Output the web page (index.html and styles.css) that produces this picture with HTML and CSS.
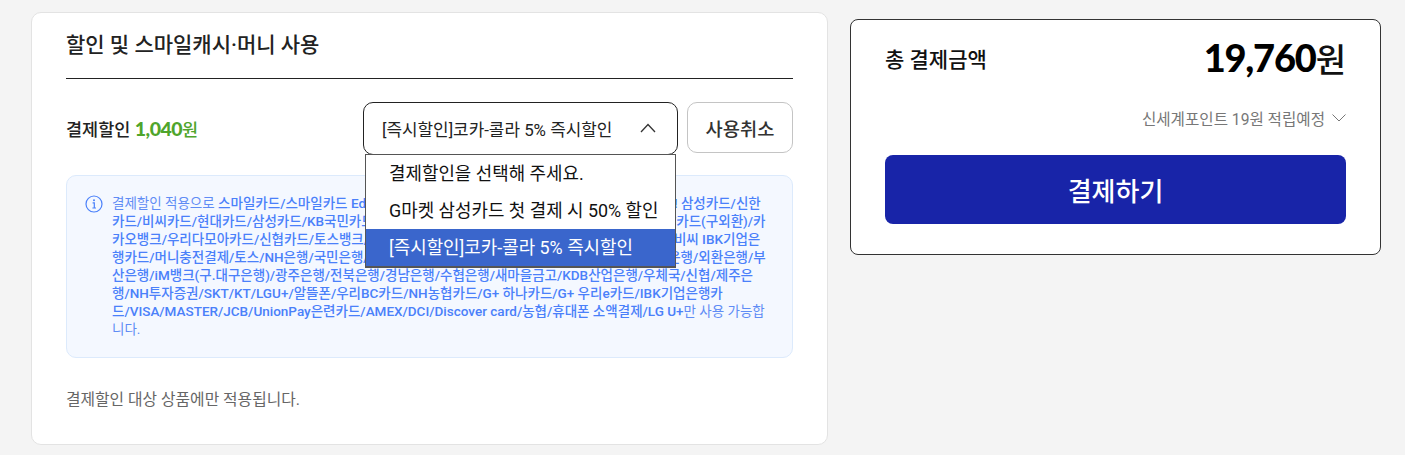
FILE: index.html
```html
<!DOCTYPE html>
<html lang="ko">
<head>
  <meta charset="UTF-8" />
  <meta name="viewport" content="width=device-width, initial-scale=1.0" />
  <title>결제하기</title>
  <link rel="stylesheet" href="styles.css">
</head>
<body>
  <div class="page">
    <section class="discount-card">
      <h2 class="discount-title">할인 및 스마일캐시·머니 사용</h2>

      <div class="discount-row">
        <div class="discount-label">결제할인 <strong class="discount-amount"><b>1,040</b>원</strong></div>
        <div class="discount-controls">
          <div class="select-wrap">
            <button class="select-box" type="button">
              <span>[즉시할인]코카-콜라 5% 즉시할인</span>
              <svg class="select-arrow" width="16" height="10" viewBox="0 0 16 10" aria-hidden="true">
                <path d="M1 9 L8 1.5 L15 9" fill="none" stroke="#333" stroke-width="1.3" />
              </svg>
            </button>
            <ul class="select-menu">
              <li>결제할인을 선택해 주세요.</li>
              <li>G마켓 삼성카드 첫 결제 시 50% 할인</li>
              <li class="selected">[즉시할인]코카-콜라 5% 즉시할인</li>
            </ul>
          </div>
          <button class="cancel-btn" type="button">사용취소</button>
        </div>
      </div>

      <div class="notice">
        <svg class="notice-icon" width="18" height="18" viewBox="0 0 18 18" aria-hidden="true">
          <circle cx="9" cy="9" r="8" fill="none" stroke="#4a80fa" stroke-width="1.2" />
          <circle cx="9" cy="5.2" r="1" fill="#4a80fa" />
          <path d="M7.6 7.8 H9.3 V13 M7.4 13 H11" fill="none" stroke="#4a80fa" stroke-width="1.2" />
        </svg>
        <p class="notice-text">결제할인 적용으로 <b>스마일카드/스마일카드 Edition2/스마일페이 간편결제 수단으로 결제 시 할인 적용! 삼성카드/신한<br>
        카드/비씨카드/현대카드/삼성카드/KB국민카드/롯데카드/하나카드/농협카드/씨티카드/수협카드/BC/카드(구외환)/카<br>
        카오뱅크/우리다모아카드/신협카드/토스뱅크/케이뱅크/수협카드/전북카드/제주카드/저축은/우체국/비씨 IBK기업은<br>
        행카드/머니충전결제/토스/NH은행/국민은행/신한은행/우리은행/하나은행/씨티은행/기업은행/농협은행/외환은행/부<br>
        산은행/iM뱅크(구.대구은행)/광주은행/전북은행/경남은행/수협은행/새마을금고/KDB산업은행/우체국/신협/제주은<br>
        행/NH투자증권/SKT/KT/LGU+/알뜰폰/우리BC카드/NH농협카드/G+ 하나카드/G+ 우리e카드/IBK기업은행카<br>
        드/VISA/MASTER/JCB/UnionPay은련카드/AMEX/DCI/Discover card/농협/휴대폰 소액결제/LG U+</b>만 사용 가능합<br>
        니다.</p>
      </div>

      <p class="discount-foot">결제할인 대상 상품에만 적용됩니다.</p>
    </section>

    <aside class="total-card">
      <div class="total-row">
        <span class="total-label">총 결제금액</span>
        <span class="total-price"><b>19,760</b>원</span>
      </div>
      <div class="point-row">
        <span>신세계포인트 19원 적립예정</span>
        <svg width="14" height="8" viewBox="0 0 14 8" aria-hidden="true">
          <path d="M0.5 0.5 L7 7 L13.5 0.5" fill="none" stroke="#777" stroke-width="1" />
        </svg>
      </div>
      <button class="pay-btn" type="button">결제하기</button>
    </aside>
  </div>
</body>
</html>
```

FILE: styles.css
```css
* {
  box-sizing: border-box;
}

body {
  margin: 0;
  background: #f4f4f4;
  font-family: Roboto, "Noto Sans CJK KR", sans-serif;
  color: #222;
  overflow: hidden;
}

.page {
  display: flex;
  align-items: flex-start;
  gap: 22px;
  padding: 12px 0 0 31px;
}

button {
  font-family: inherit;
  background: #fff;
  cursor: pointer;
}

/* left card */
.discount-card {
  width: 797px;
  height: 433px;
  background: #fff;
  border: 1px solid #e3e3e3;
  border-radius: 10px;
  padding: 0 34px;
}

.discount-title {
  margin: 0;
  height: 66px;
  line-height: 64px;
  font-size: 21px;
  font-weight: 500;
  color: #222;
  border-bottom: 1px solid #222;
}

.discount-row {
  display: flex;
  justify-content: space-between;
  align-items: center;
  margin-top: 23px;
  height: 52px;
}

.discount-label {
  font-size: 17.5px;
  font-weight: 500;
}

.discount-amount {
  font-weight: 500;
  color: #4fa52c;
}

.discount-amount b {
  font-family: Lato, sans-serif;
  font-weight: 900;
  font-size: 19.5px;
  letter-spacing: -0.5px;
}

.discount-controls {
  display: flex;
  gap: 9px;
}

.select-wrap {
  position: relative;
  width: 315px;
}

.select-box {
  display: flex;
  justify-content: space-between;
  align-items: center;
  width: 100%;
  height: 53px;
  padding: 0 21px 0 18px;
  border: 1px solid #222;
  border-radius: 10px;
  font-size: 16.9px;
  color: #222;
}

.select-menu {
  position: absolute;
  top: 52px;
  left: 2px;
  width: 311px;
  margin: 0;
  padding: 0;
  list-style: none;
  background: #fff;
  border: 1px solid #555;
  border-bottom: 2px solid #555;
  z-index: 10;
}

.select-menu li {
  height: 37px;
  line-height: 37px;
  padding-left: 23px;
  font-size: 17.9px;
  color: #111;
}

.select-menu li.selected {
  background: #3a66cc;
  color: #fff;
}

.cancel-btn {
  width: 106px;
  height: 51px;
  border: 1px solid #c4c4c4;
  border-radius: 10px;
  font-size: 18.7px;
  font-weight: 500;
  color: #333;
}

.notice {
  display: flex;
  gap: 9px;
  height: 183px;
  margin-top: 21px;
  padding: 18px 18px 0 18px;
  background: #f4f8ff;
  border: 1px solid #dceafc;
  border-radius: 10px;
}

.notice-icon {
  flex: none;
  margin-top: 1px;
}

.notice-text {
  margin: 0;
  font-size: 13.5px;
  line-height: 18px;
  color: #5f8cf5;
  white-space: nowrap;
}

.notice-text b {
  font-weight: 500;
  color: #4a80fa;
}

.discount-foot {
  margin: 29px 0 0;
  font-size: 15.8px;
  color: #666;
}

/* right card */
.total-card {
  width: 531px;
  height: 236px;
  margin-top: 7px;
  background: #fff;
  border: 1px solid #333;
  border-radius: 8px;
  padding: 0 34px;
}

.total-row {
  display: flex;
  justify-content: space-between;
  align-items: center;
  height: 76px;
}

.total-label {
  font-size: 21px;
  font-weight: 500;
  color: #111;
}

.total-price {
  font-size: 33px;
  font-weight: 500;
  color: #111;
}

.total-price b {
  font-family: Lato, sans-serif;
  font-weight: 900;
  font-size: 38px;
  letter-spacing: -1.2px;
  color: #000;
}

.point-row {
  display: flex;
  justify-content: flex-end;
  align-items: center;
  gap: 7px;
  height: 44px;
  font-size: 15.6px;
  color: #777;
}

.pay-btn {
  display: block;
  width: 461px;
  height: 69px;
  margin-top: 15px;
  border: none;
  border-radius: 8px;
  background: #1824a8;
  color: #fff;
  font-size: 26px;
  font-weight: 500;
}
```
